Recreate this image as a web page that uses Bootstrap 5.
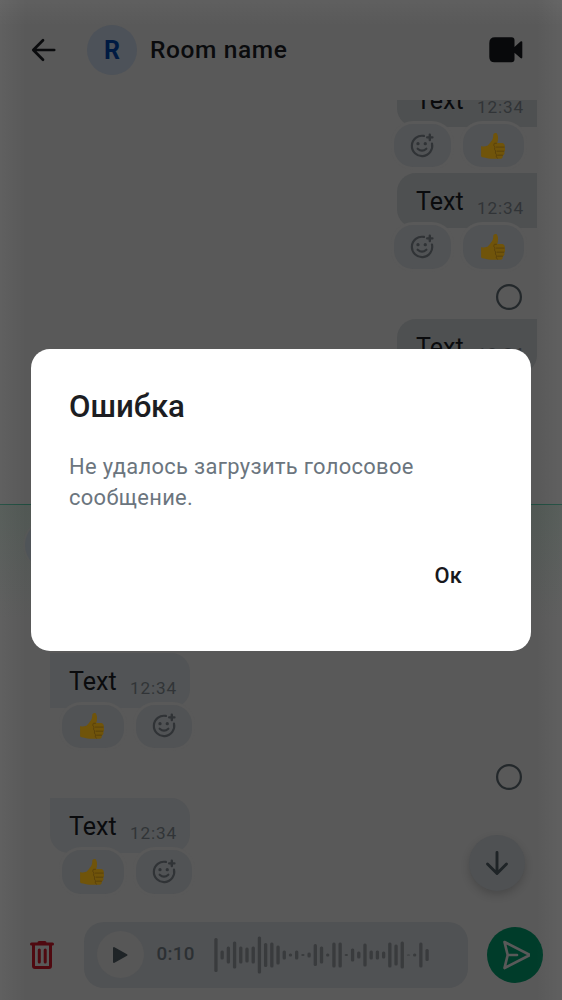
<!DOCTYPE html>
<html lang="ru">
<head>
<meta charset="utf-8">
<meta name="viewport" content="width=device-width, initial-scale=1">
<title>Room name</title>
<link href="https://cdn.jsdelivr.net/npm/bootstrap@5.3.0/dist/css/bootstrap.min.css" rel="stylesheet">
<style>
:root{--page:#595959;--fill:#525456;--ink:#0a0b0d;--icon:#1f2427}
body{font-family:Roboto,sans-serif;background:var(--page);color:var(--ink);width:562px;height:1000px;overflow:hidden}
.screen{width:562px;height:1000px}
.glow{position:absolute;inset:0;pointer-events:none;background:linear-gradient(90deg,rgba(255,255,255,.045),transparent 26px,transparent 536px,rgba(255,255,255,.045)),linear-gradient(rgba(255,255,255,.04),transparent 26px)}
.topbar{height:100px;padding:0 39px 0 31px}
.avatar-r{width:50px;height:50px;background:#4d5259;color:#001a42;font-weight:700;font-size:25px;margin-left:30px;padding-top:1px}
.room{font-size:24.5px;font-weight:500;letter-spacing:.62px;margin-left:13px;line-height:30px}
.thread{height:800px}
.msg{width:140px;height:55px;background:var(--fill);border-radius:19px;padding:0 13px 0 19px;position:relative}
.out .msg{background:#4e5051;border-top-right-radius:0;border-bottom-right-radius:0}
.out .last-out{border-bottom-right-radius:19px}
.out{padding-right:25px}
.in{padding-left:50px}
.in .msg{border-top-left-radius:0}
.in .first-in{border-bottom-left-radius:0}
.msg-text{font-size:25px;line-height:57px;letter-spacing:.05px}
.msg-time{font-size:17.2px;letter-spacing:.85px;color:#313437;line-height:20px;margin-top:25px}
.pills{gap:12px;margin-top:-3px;position:relative;height:43.6px}
.out .pills{padding-right:12.8px}
.in .pills{padding-left:12.2px}
.pill{height:43.6px;border-radius:19px;background:#515355;box-shadow:0 0 0 3px var(--page)}
.pill-face{width:56.5px}.pill-thumb{width:61.5px}
.out .pill svg,.in .pill-thumb svg{margin-right:1px}
.group{height:95.6px;flex:none}
.tick{height:26px;padding-right:40px;flex:none}
.unread{height:120px;border-top:1px solid #204c3f;background:linear-gradient(#515854,var(--page) 95%);flex:none;padding:15px 0 0 25px}
.avatar-side{width:50px;height:50px;background:#4f5458;box-shadow:0 0 0 2px #565857}
.to-end{position:absolute;left:468.500px;top:834.500px;width:56px;height:56px;background:#4f5153;box-shadow:0 4px 8px rgba(0,0,0,.18)}
.composer{height:100px;padding:9px 19px 0 29px}
.voice{width:384px;height:66px;border-radius:20px;background:#505254;margin-left:29px;padding-left:12.5px}
.play{width:47px;height:47px;background:#575757}
.length{font-size:18.8px;font-weight:500;color:#2c3033;letter-spacing:.35px;margin-left:13px;width:57.500px}
.send{width:56px;height:56px;background:#003c2a;margin-left:19px}
.dialog-box{position:absolute;left:31px;top:349px;width:500px;height:301.5px;border-radius:19px;background:#fff;padding:39px 38px 0}
.dialog-title{font-size:31.2px;font-weight:500;color:#1c1d22;line-height:38px;letter-spacing:-.05px}
.dialog-copy{font-size:21.9px;line-height:31px;color:#6b757e;letter-spacing:.33px;margin-top:25px}
.ok{font-size:21.9px;font-weight:500;color:#17181c;border:0;background:none;line-height:30px;padding:0;margin:48px 31px 0 0;letter-spacing:.2px}
</style>
</head>
<body>
<svg class="d-none">
<symbol id="face" viewBox="0 0 24 24"><g fill="none" stroke="#303336" stroke-width="2" stroke-linecap="round"><path d="M13.800 2.700A9.400 9.400 0 1 0 21.200 9.800M8 14.500Q12 18.200 16 14.500"/><path d="M19.200 1.600v4.800M16.800 4h4.800" stroke-width="2.200"/></g><g fill="#303336"><circle cx="8.300" cy="9.900" r="1.500"/><circle cx="15" cy="9.900" r="1.500"/></g></symbol>
<symbol id="thumb" viewBox="0 0 24 26"><path fill="#70540a" d="M.6 13.200Q.1 12.800.1 14v9q0 1.100 1.200 1.200c3 .2 5 1.300 8.600 1.600h8.800c2.400 0 3.500-1.500 2.900-3.200 1.700-.7 2.300-2.500 1.600-4 1.400-1.100 1.400-3.300.3-4.200.9-2-.2-4.500-2.500-4.500h-4.700c.8-2.500 1.100-5.700.2-8.100C15.800-.1 14.500-.1 13.300.4c-1.200.5-1 1.300-1 2.400-.1 4-2.600 6.400-5.100 9.200-1.300 1.500-4.200 1.600-6.600 1.200z"/><path d="M15.500 10.300h-2.200q-1.500 2 .7 3.700-1.300 2.300.6 4-.8 2.200.8 3.600-.5 2.400.8 3.600M15.500 14.100h7.700M16 18.200h6.800M16.500 22.200h5" fill="none" stroke="#58400a" stroke-width=".9" stroke-linecap="round"/></symbol>
</svg>
<main class="screen position-relative d-flex flex-column">
<header class="topbar d-flex align-items-center">
  <svg width="26" height="26" viewBox="0 0 26 26" fill="none" stroke="#0a0b0d" stroke-width="2.700" stroke-linecap="round" stroke-linejoin="round"><path d="M23.200 13H2.500M12 3.200L2.300 13l9.700 9.800"/></svg>
  <div class="avatar-r rounded-circle d-flex align-items-center justify-content-center">R</div>
  <div class="room">Room name</div>
  <svg class="ms-auto" width="34" height="26" viewBox="0 0 34 26" fill="#08090b"><path d="M6 .3h16.500Q25.500.3 25.500 3.300v6.600l6-5.300q1.800-1.100 1.800.7v15q0 1.800-1.800.7l-6-5.300v6.600q0 3-3 3H6Q.3 25.600.3 20V6Q.3.3 6 .3z"/></svg>
</header>

<section class="thread overflow-hidden d-flex flex-column">
  <div class="group out d-flex flex-column align-items-end" style="margin-top:-28.300px">
    <div class="msg d-flex justify-content-between"><span class="msg-text">Text</span><span class="msg-time">12:34</span></div>
    <div class="pills d-flex"><span class="pill pill-face d-flex align-items-center justify-content-center"><svg width="26" height="26"><use href="#face"/></svg></span><span class="pill pill-thumb d-flex align-items-center justify-content-center"><svg width="24" height="26"><use href="#thumb"/></svg></span></div>
  </div>
  <div class="group out d-flex flex-column align-items-end" style="margin-top:5.900px">
    <div class="msg d-flex justify-content-between"><span class="msg-text">Text</span><span class="msg-time">12:34</span></div>
    <div class="pills d-flex"><span class="pill pill-face d-flex align-items-center justify-content-center"><svg width="26" height="26"><use href="#face"/></svg></span><span class="pill pill-thumb d-flex align-items-center justify-content-center"><svg width="24" height="26"><use href="#thumb"/></svg></span></div>
  </div>
  <div class="tick d-flex justify-content-end" style="margin-top:15.400px"><svg width="26" height="26" viewBox="0 0 26 26"><circle cx="13" cy="13" r="11.900" fill="none" stroke="#23282b" stroke-width="2.200"/></svg></div>
  <div class="group out d-flex flex-column align-items-end" style="margin-top:8.400px">
    <div class="msg last-out d-flex justify-content-between"><span class="msg-text">Text</span><span class="msg-time">12:34</span></div>
  </div>
  <div class="unread" style="margin-top:89.400px"><div class="avatar-side rounded-circle"></div></div>
  <div class="group in" style="margin-top:29px">
    <div class="msg first-in d-flex justify-content-between"><span class="msg-text">Text</span><span class="msg-time">12:34</span></div>
    <div class="pills d-flex"><span class="pill pill-thumb d-flex align-items-center justify-content-center"><svg width="24" height="26"><use href="#thumb"/></svg></span><span class="pill pill-face d-flex align-items-center justify-content-center"><svg width="26" height="26"><use href="#face"/></svg></span></div>
  </div>
  <div class="tick d-flex justify-content-end" style="margin-top:15.400px"><svg width="26" height="26" viewBox="0 0 26 26"><circle cx="13" cy="13" r="11.900" fill="none" stroke="#23282b" stroke-width="2.200"/></svg></div>
  <div class="group in" style="margin-top:8.500px">
    <div class="msg d-flex justify-content-between"><span class="msg-text">Text</span><span class="msg-time">12:34</span></div>
    <div class="pills d-flex"><span class="pill pill-thumb d-flex align-items-center justify-content-center"><svg width="24" height="26"><use href="#thumb"/></svg></span><span class="pill pill-face d-flex align-items-center justify-content-center"><svg width="26" height="26"><use href="#face"/></svg></span></div>
  </div>
</section>

<footer class="composer d-flex align-items-center">
  <svg width="26" height="30" viewBox="0 0 26 30" fill="none" stroke="#4f0910" stroke-width="3" stroke-linejoin="round" stroke-linecap="round"><path d="M2.500 4h21M10 2.600h6M4.500 5v21q0 1.500 1.500 1.500h14q1.500 0 1.500-1.500V5M10.300 10v12M16.200 10v12"/></svg>
  <div class="voice d-flex align-items-center">
    <div class="play rounded-circle d-flex align-items-center justify-content-center"><svg width="16" height="18" viewBox="0 0 16 18"><path d="M2 2v14L14.500 9z" fill="#1f2427" stroke="#1f2427" stroke-width="2" stroke-linejoin="round"/></svg></div>
    <span class="length">0:10</span>
    <svg id="wave" width="220" height="40"></svg>
  </div>
  <div class="send rounded-circle d-flex align-items-center justify-content-center"><svg width="30" height="30" viewBox="0 0 30 30" fill="none" stroke="#595959" stroke-width="2.700" stroke-linejoin="round" stroke-linecap="round"><path d="M4.500 2L30 15 4.500 28l3.200-13zM8 15h9"/></svg></div>
</footer>

<div class="to-end rounded-circle d-flex align-items-center justify-content-center"><svg width="24" height="26" viewBox="0 0 24 26" fill="none" stroke="#1f2427" stroke-width="2.900" stroke-linecap="round" stroke-linejoin="round"><path d="M12 2.500v20.500M2.500 14L12 23.500l9.500-9.500"/></svg></div>
<div class="glow"></div>

<div class="dialog-box" role="dialog">
  <div class="dialog-title">Ошибка</div>
  <div class="dialog-copy">Не удалось загрузить голосовое<br>сообщение.</div>
  <div class="d-flex justify-content-end"><button class="ok">Ок</button></div>
</div>
</main>
<script src="https://cdn.jsdelivr.net/npm/bootstrap@5.3.0/dist/js/bootstrap.bundle.min.js"></script>
<script>
const levels=[34,9,17,27,17,15,17,37,24,25,19,9,3,9,2,5,22,17,3,25,25,2,13,7,23,9,9,7,25,21,27,1,3,25,12];
document.getElementById('wave').innerHTML=levels.map((h,i)=>`<rect x="${(i*6.21+.3).toFixed(2)}" y="${20-h/2}" width="3.300" height="${h}" rx="1.500" fill="#393b3d"/>`).join('');
</script>
</body>
</html>
